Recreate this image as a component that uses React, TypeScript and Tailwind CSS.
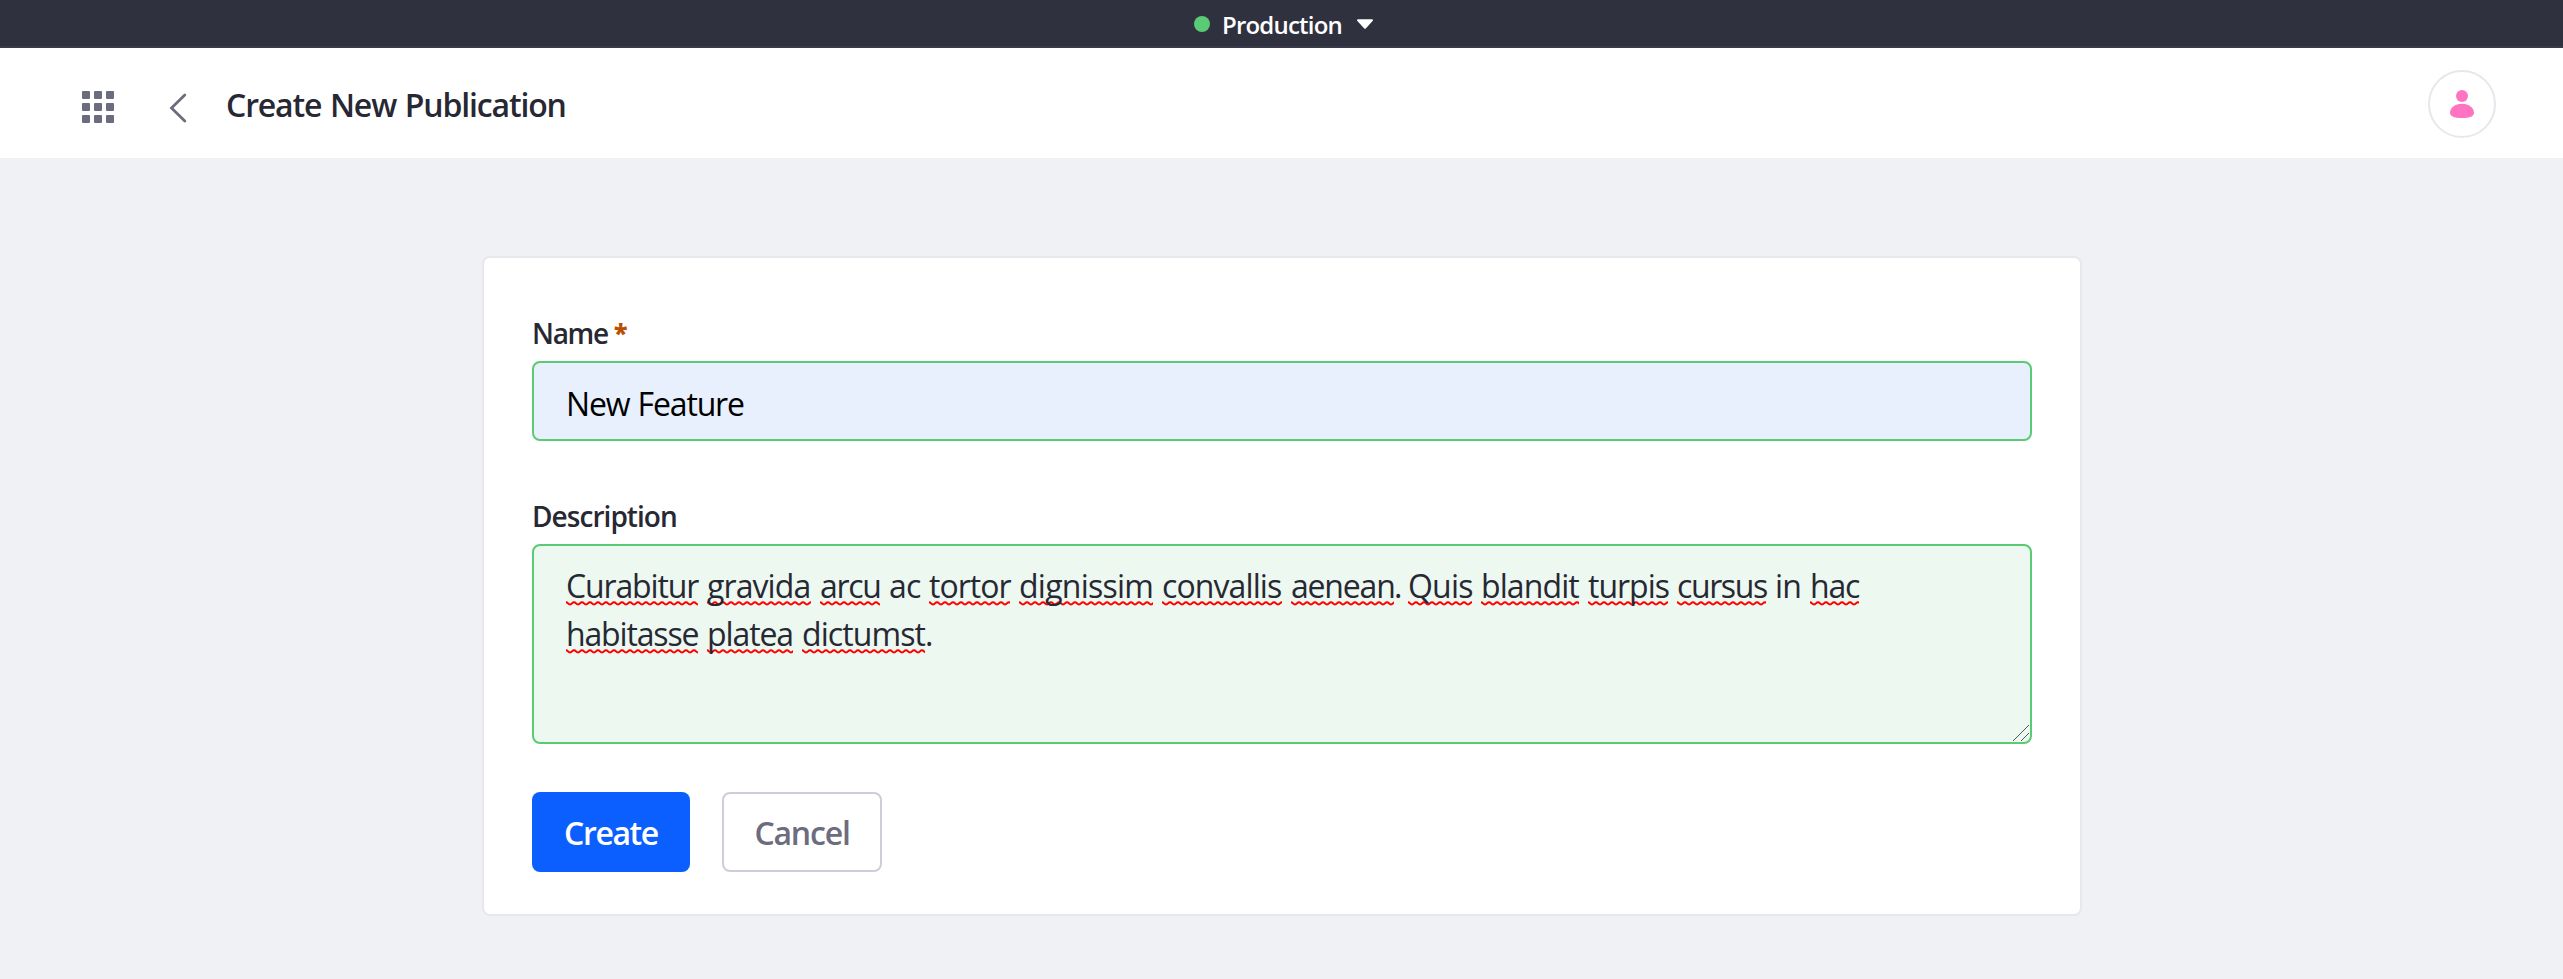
import React from "react";

type WordProps = { text: string; w: string; ls: string; squiggle?: boolean; tail?: string };

function Squiggle() {
  return (
    <svg className="absolute left-0 top-[39px] h-[5px] w-full" aria-hidden="true">
      <defs>
        <pattern id="wave" width="8" height="5" patternUnits="userSpaceOnUse">
          <path d="M-4 3.500C-2 3.500-2 1.200 0 1.200S2 3.500 4 3.500 6 1.200 8 1.200 10 3.500 12 3.500" fill="none" stroke="#f00" strokeWidth="2" />
        </pattern>
      </defs>
      <rect width="100%" height="5" fill="url(#wave)" />
    </svg>
  );
}

function Word({ text, w, ls, squiggle = true, tail }: WordProps) {
  return (
    <span className={`relative flex shrink-0 ${w}`}>
      {squiggle && <Squiggle />}
      <span className={`relative w-full shrink-0 whitespace-nowrap ${ls}`}>{text}</span>
      {tail && <span className="relative -mr-2 w-2 shrink-0">{tail}</span>}
    </span>
  );
}

const lineOne: WordProps[] = [
  { text: "Curabitur", w: "w-[132px]", ls: "tracking-[-1.15px]" },
  { text: "gravida", w: "w-[104px]", ls: "tracking-[-0.9px]" },
  { text: "arcu", w: "w-[60px]", ls: "tracking-[-1.3px]" },
  { text: "ac", w: "w-[31px]", ls: "tracking-[-0.8px]", squiggle: false },
  { text: "tortor", w: "w-[81px]", ls: "tracking-[-1px]" },
  { text: "dignissim", w: "w-[134px]", ls: "tracking-[-0.75px]" },
  { text: "convallis", w: "w-[120px]", ls: "tracking-[-0.9px]" },
  { text: "aenean", w: "w-[103px]", ls: "tracking-[-1.2px]", tail: "." },
];

const lineOneEnd: WordProps[] = [
  { text: "Quis", w: "w-[64px]", ls: "tracking-[-0.8px]" },
  { text: "blandit", w: "w-[98px]", ls: "tracking-[-0.9px]" },
  { text: "turpis", w: "w-[80px]", ls: "tracking-[-1px]" },
  { text: "cursus", w: "w-[89px]", ls: "tracking-[-1.4px]" },
  { text: "in", w: "w-[26px]", ls: "tracking-[-0.8px]", squiggle: false },
  { text: "hac", w: "w-[49px]", ls: "tracking-[-1.2px]" },
];

const lineTwo: WordProps[] = [
  { text: "habitasse", w: "w-[132px]", ls: "tracking-[-1.15px]" },
  { text: "platea", w: "w-[86px]", ls: "tracking-[-1.1px]" },
  { text: "dictumst", w: "w-[123px]", ls: "tracking-[-0.9px]", tail: "." },
];

function EnvironmentBar() {
  return (
    <div className="flex h-12 items-center border-b-2 border-[#393a4a] bg-[#30313f] pl-[1194px] pt-[2px] text-white">
      <span className="h-4 w-4 rounded-full bg-[#5aca75]" />
      <span className="ml-3 w-[118px] whitespace-nowrap pt-[2px] text-[24px] font-semibold leading-[42px] tracking-[-0.8px]">Production</span>
      <svg className="ml-[17px] h-[10px] w-4" viewBox="0 0 16 10">
        <path d="M1 0.3h14c.9 0 1.3.9.6 1.6L9 9.2c-.6.7-1.4.7-2 0L.4 1.900C-.3 1.200.1.3 1 .3z" fill="#fff" />
      </svg>
    </div>
  );
}

function Header() {
  return (
    <header className="flex h-[110px] items-center justify-between bg-white pl-[82px] pr-[67px]">
      <div className="flex items-center pt-2">
        <div className="grid grid-cols-3 gap-1">
          {Array.from({ length: 9 }, (_, i) => (
            <span key={i} className="h-2 w-2 rounded-[1px] bg-[#6b6c7e]" />
          ))}
        </div>
        <svg className="ml-[55px] mt-[2px] h-[30px] w-[18px]" viewBox="0 0 18 30" fill="none" stroke="#6b6c7e" strokeWidth="2.8" strokeLinecap="round">
          <path d="M15.800 2 2.500 15 15.800 28" />
        </svg>
        <h1 className="mb-1 ml-[39px] whitespace-nowrap text-[32px] font-semibold leading-[48px] tracking-[-1.15px] [word-spacing:1.500px]">Create New Publication</h1>
      </div>
      <div className="mt-[2px] flex h-[68px] w-[68px] items-center justify-center rounded-full border-2 border-[#e7e7ed]">
        <svg className="h-7 w-6" viewBox="0 0 24 28" fill="#ff73c3">
          <circle cx="12" cy="6" r="6" />
          <path d="M12 13.700c7 0 12 4 12 9 0 3.600-4 5.300-12 5.300S0 26.300 0 22.700c0-5 5-9 12-9z" />
        </svg>
      </div>
    </header>
  );
}

export default function App() {
  return (
    <div className="h-[979px] w-full overflow-hidden bg-[#f0f1f5] font-['Open_Sans',sans-serif] text-[#272833]">
      <EnvironmentBar />
      <Header />
      <main className="ml-[482px] mt-[98px] h-[660px] w-[1600px] rounded-lg border-2 border-[#e7e7ed] bg-white px-12">
        <label className="flex h-[103px] items-end pb-[10px] text-[28px] font-semibold leading-[36px]">
          <span className="w-[76px] tracking-[-1.3px]">Name</span>
          <span className="mb-px ml-[6px] text-[25px] font-extrabold text-[#b95000]">*</span>
        </label>
        <div className="h-20 rounded-lg border-2 border-[#5aca75] bg-[#e8f0fe] px-8 pt-[4px] text-[32px] leading-[73px] tracking-[-1.15px] text-black [word-spacing:1px]">New Feature</div>
        <label className="flex h-[103px] items-end pb-[10px] text-[28px] font-semibold leading-[36px] tracking-[-0.95px]">Description</label>
        <div className="relative h-[200px] rounded-lg border-2 border-[#5aca75] bg-[#edf8f0] px-8 pt-4 text-[32px] leading-[48px]">
          <div className="flex">
            <div className="flex gap-[9px]">{lineOne.map((w) => <Word key={w.text} {...w} />)}</div>
            <div className="ml-[14px] flex gap-[9px]">{lineOneEnd.map((w) => <Word key={w.text} {...w} />)}</div>
          </div>
          <div className="flex gap-[9px]">{lineTwo.map((w) => <Word key={w.text} {...w} />)}</div>
          <svg className="absolute bottom-0 right-0 h-[18px] w-[18px]" viewBox="0 0 18 18" stroke="#555" strokeWidth="1" fill="none">
            <path d="M1 17 17 1M9 17 17 9" />
          </svg>
        </div>
        <div className="mt-12 flex gap-8 text-[32px] font-semibold leading-[76px]">
          <button className="h-20 w-[158px] rounded-lg bg-[#0b5fff] pt-[2px] tracking-[-1.4px] text-white">Create</button>
          <button className="h-20 w-40 rounded-lg border-2 border-[#cdced9] pt-[2px] leading-[74px] tracking-[-1.2px] text-[#6b6c7e]">Cancel</button>
        </div>
      </main>
    </div>
  );
}
